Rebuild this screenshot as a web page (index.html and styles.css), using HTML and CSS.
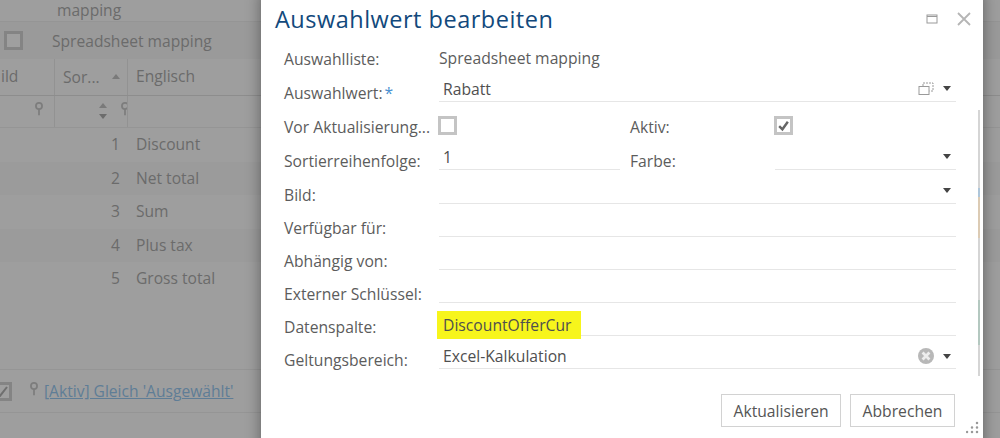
FILE: index.html
```html
<!DOCTYPE html>
<html lang="de">
<head>
    <meta charset="UTF-8">
    <title>Auswahlwert bearbeiten</title>
    <link rel="stylesheet" href="styles.css">
</head>
<body>
    <div class="page">
        <div class="top-row"><span>mapping</span></div>
        <div class="list-row">
            <span class="check"></span>
            <span>Spreadsheet mapping</span>
        </div>
        <div class="grid-head">
            <div class="col-bild">ild</div>
            <div class="col-sort"><span>Sor...</span><i class="up"></i></div>
            <div class="col-name">Englisch</div>
        </div>
        <div class="grid-filter">
            <div class="col-bild">
                <svg class="pin" viewBox="0 0 10 16"><circle cx="5" cy="4.500" r="3.500"/><path d="M5 8v7"/></svg>
            </div>
            <div class="col-sort">
                <span class="spin"><i class="up"></i><i class="down"></i></span>
                <svg class="pin" viewBox="0 0 10 16"><circle cx="5" cy="4.500" r="3.500"/><path d="M5 8v7"/></svg>
            </div>
            <div class="col-name"></div>
        </div>
        <div class="grid-row"><div class="col-bild"></div><div class="col-sort num">1</div><div class="col-name">Discount</div></div>
        <div class="grid-row alt"><div class="col-bild"></div><div class="col-sort num">2</div><div class="col-name">Net total</div></div>
        <div class="grid-row"><div class="col-bild"></div><div class="col-sort num">3</div><div class="col-name">Sum</div></div>
        <div class="grid-row alt"><div class="col-bild"></div><div class="col-sort num">4</div><div class="col-name">Plus tax</div></div>
        <div class="grid-row"><div class="col-bild"></div><div class="col-sort num">5</div><div class="col-name">Gross total</div></div>
        <div class="grid-foot">
            <span class="check checked"><svg viewBox="0 0 12 12"><path d="M1 9l3 2 7-9"/></svg></span>
            <svg class="pin" viewBox="0 0 10 16"><circle cx="5" cy="4.500" r="3.500"/><path d="M5 8v7"/></svg>
            <a href="#">[Aktiv] Gleich 'Ausgewählt'</a>
        </div>
    </div>

    <div class="dialog">
        <div class="dialog-head">
            <h1>Auswahlwert bearbeiten</h1>
            <span class="win-icons">
                <svg class="max-icon" viewBox="0 0 12 10"><rect x="1" y="1" width="10" height="8"/><path d="M1 2.500h10"/></svg>
                <svg class="close-icon" viewBox="0 0 14 14"><path d="M1 1l12 12M13 1L1 13"/></svg>
            </span>
        </div>
        <div class="form">
            <div class="form-row">
                <label>Auswahlliste:</label>
                <div class="plain">Spreadsheet mapping</div>
            </div>
            <div class="form-row">
                <label>Auswahlwert:<b>*</b></label>
                <div class="field">
                    <span>Rabatt</span>
                    <svg class="copy-icon" viewBox="0 0 16 13"><rect x="1" y="4.500" width="10" height="8"/><path d="M5 4V1h10v8h-3.500" stroke-dasharray="2 1"/></svg>
                    <i class="down"></i>
                </div>
            </div>
            <div class="form-row">
                <label>Vor Aktualisierung...</label>
                <div class="half"><span class="box"></span></div>
                <label class="label2">Aktiv:</label>
                <div class="half"><span class="box on"><svg viewBox="0 0 12 12"><path d="M2 6.500l3 3 5-7"/></svg></span></div>
            </div>
            <div class="form-row">
                <label>Sortierreihenfolge:</label>
                <div class="field half"><span>1</span></div>
                <label class="label2">Farbe:</label>
                <div class="field half"><span></span><i class="down"></i></div>
            </div>
            <div class="form-row">
                <label>Bild:</label>
                <div class="field"><span></span><i class="down"></i></div>
            </div>
            <div class="form-row short">
                <label>Verfügbar für:</label>
                <div class="field"></div>
            </div>
            <div class="form-row short">
                <label>Abhängig von:</label>
                <div class="field"></div>
            </div>
            <div class="form-row short">
                <label>Externer Schlüssel:</label>
                <div class="field"></div>
            </div>
            <div class="form-row short">
                <label>Datenspalte:</label>
                <div class="field"><span class="marked">DiscountOfferCur</span></div>
            </div>
            <div class="form-row short">
                <label>Geltungsbereich:</label>
                <div class="field">
                    <span>Excel-Kalkulation</span>
                    <span class="clear"><svg viewBox="0 0 14 14"><path d="M4 4l6 6M10 4l-6 6"/></svg></span>
                    <i class="down"></i>
                </div>
            </div>
        </div>
        <div class="scrollbar"></div>
        <div class="buttons">
            <button type="button">Aktualisieren</button>
            <button type="button">Abbrechen</button>
        </div>
        <svg class="grip" viewBox="0 0 14 14"><path d="M11 2h.01M6 6.500h.01M11 6.500h.01M1 11h.01M6 11h.01M11 11h.01"/></svg>
    </div>
</body>
</html>
```

FILE: styles.css
```css
html, body {
    margin: 0;
    height: 438px;
    overflow: hidden;
}
body {
    font-family: "Open Sans", "Noto Sans", sans-serif;
    font-size: 15.700px;
    color: #333;
    background-color: #9e9e9e;
}
i.up, i.down {
    display: block;
    flex-shrink: 0;
    width: 0;
    height: 0;
    border-left: 4.500px solid transparent;
    border-right: 4.500px solid transparent;
}
i.up { border-bottom: 5px solid #7a7a7a; }
i.down { border-top: 5px solid #444; }

/* gedimmter Hintergrund */
.page {
    height: 438px;
    color: #6b6b6b;
    font-size: 15.600px;
    overflow: hidden;
}
.pin {
    width: 10px;
    height: 14px;
    flex-shrink: 0;
    fill: none;
    stroke: #7d7d7d;
    stroke-width: 2;
}
.top-row {
    height: 22px;
    padding-left: 57px;
    line-height: 20px;
    border-bottom: 1px solid #959595;
    box-sizing: border-box;
}
.list-row {
    height: 37px;
    display: flex;
    align-items: center;
    gap: 29px;
    padding-left: 4px;
    background-color: #9a9a9a;
}
.check {
    display: block;
    width: 13px;
    height: 13px;
    border: 3px solid #848484;
    background-color: #9f9f9f;
}
.grid-head, .grid-filter, .grid-row {
    display: flex;
}
.grid-head {
    height: 36px;
    line-height: 35px;
    border-bottom: 1px solid #8d8d8d;
    box-sizing: content-box;
}
.col-bild {
    width: 55px;
    flex-shrink: 0;
    border-right: 1px solid #929292;
    box-sizing: border-box;
}
.col-sort {
    width: 73px;
    flex-shrink: 0;
    border-right: 1px solid #929292;
    box-sizing: border-box;
    display: flex;
    align-items: center;
    padding-left: 8px;
    overflow: hidden;
}
.col-name {
    flex: 1;
    padding-left: 8px;
}
.grid-head .col-bild { padding-left: 1px; }
.grid-head .col-sort i { margin: -1px 0 0 12px; }
.grid-filter {
    height: 32px;
    border-bottom: 1px solid #959595;
    box-sizing: border-box;
}
.grid-filter .col-bild {
    display: flex;
    justify-content: flex-end;
    padding: 6px 10px 0 0;
}
.grid-filter .col-sort {
    align-items: flex-start;
    padding-top: 6px;
}
.spin {
    display: flex;
    flex-direction: column;
    gap: 6px;
    margin: 1px 0 0 36px;
}
.spin i.down { border-top-color: #6c6c6c; }
.grid-filter .col-sort .pin { margin-left: 13px; }
.grid-row {
    height: 33.500px;
    line-height: 33.500px;
}
.grid-row .col-bild, .grid-row .col-sort { border-right: 0; }
.grid-row .num {
    justify-content: flex-end;
    padding-right: 8px;
}
.grid-row.alt { background-color: #9b9b9b; }
.grid-foot {
    display: flex;
    align-items: center;
    height: 44px;
    margin-top: 73.500px;
    border-top: 1px solid #959595;
    border-bottom: 1px solid #959595;
    box-sizing: border-box;
}
.grid-foot .check.checked {
    margin-left: -7px;
    display: flex;
    flex-shrink: 0;
}
.grid-foot .check svg {
    width: 12px;
    height: 12px;
    fill: none;
    stroke: #6f6f6f;
    stroke-width: 2;
}
.grid-foot .pin { margin: -4px 0 0 17px; }
.grid-foot a {
    margin-left: 5px;
    color: #5f7d96;
    white-space: nowrap;
}

/* Dialog */
.dialog {
    position: absolute;
    left: 261px;
    top: -8px;
    width: 722px;
    height: 460px;
    background-color: #fff;
    box-shadow: 0 0 14px rgba(0,0,0,0.4);
}
.dialog-head {
    display: flex;
    justify-content: space-between;
    align-items: center;
    height: 42px;
    padding: 0 12px 0 14px;
}
.dialog-head h1 {
    margin: 12px 0 0;
    font-size: 23.500px;
    font-weight: 400;
    letter-spacing: 0.500px;
    color: #12497c;
}
.win-icons {
    display: flex;
    align-items: center;
    gap: 19px;
    margin-top: 12px;
}
.max-icon {
    width: 12px;
    height: 10px;
    fill: none;
    stroke: #9a9a9a;
    stroke-width: 1;
}
.close-icon {
    width: 14px;
    height: 14px;
    fill: none;
    stroke: #b5b5b5;
    stroke-width: 1.800;
}
.form {
    padding: 0 27px 0 23px;
    width: 672px;
}
.form-row {
    display: flex;
    height: 34px;
}
.form-row.short { height: 33px; }
.form-row label {
    width: 155px;
    flex-shrink: 0;
    padding-top: 14px;
    box-sizing: border-box;
    color: #5c5c5c;
    white-space: nowrap;
}
.form-row.short label { padding-top: 13px; }
.form-row label b {
    color: #4a90d0;
    font-weight: 400;
    margin-left: 2px;
}
.form-row .label2 {
    padding-left: 10px;
}
.plain {
    padding-top: 13px;
    color: #5c5c5c;
}
.field {
    flex: 1;
    display: flex;
    align-items: center;
    gap: 9px;
    border-bottom: 1px solid #e6e6e6;
    padding: 8px 5px 0 4px;
    color: #4f4f4f;
}
.field > span:first-child {
    flex: 1;
}
.half {
    flex: none;
    width: 181px;
    box-sizing: border-box;
}
.box {
    display: block;
    width: 13px;
    height: 13px;
    margin: 14px 0 0 -1px;
    border: 3px solid #c4c4c4;
}
.box svg {
    display: block;
    width: 13px;
    height: 13px;
    fill: none;
    stroke: #666;
    stroke-width: 2.200;
}
.copy-icon {
    width: 16px;
    height: 13px;
    fill: none;
    stroke: #9a9a9a;
    stroke-width: 1;
}
.clear {
    display: block;
    width: 16px;
    height: 16px;
    border-radius: 50%;
    background-color: #b8b8b8;
}
.clear svg {
    display: block;
    width: 16px;
    height: 16px;
    fill: none;
    stroke: #eee;
    stroke-width: 2.400;
}
.field > span.marked {
    flex: none;
    margin: 3px 0 0 -6px;
    padding: 3px 9px 3px 6px;
    background-color: #f7f51c;
}
.scrollbar {
    position: absolute;
    right: 3px;
    top: 118px;
    height: 266px;
    width: 2px;
    background: linear-gradient(#d5d5d5 0 78px, #aec6da 78px 87px, #dccbb4 87px 128px, #d5d5d5 128px 190px, #b4c8c0 190px 235px, #d5d5d5 235px);
}
.buttons {
    display: flex;
    justify-content: flex-end;
    gap: 9px;
    padding: 25px 28px 0 0;
}
.buttons button {
    height: 33px;
    padding: 0 11.500px;
    font: inherit;
    color: #555;
    background-color: #fff;
    border: 1px solid #d2d2d2;
}
.grip {
    position: absolute;
    right: 3px;
    bottom: 17px;
    width: 14px;
    height: 14px;
    fill: none;
    stroke: #999;
    stroke-width: 2.500;
    stroke-linecap: round;
}
```
